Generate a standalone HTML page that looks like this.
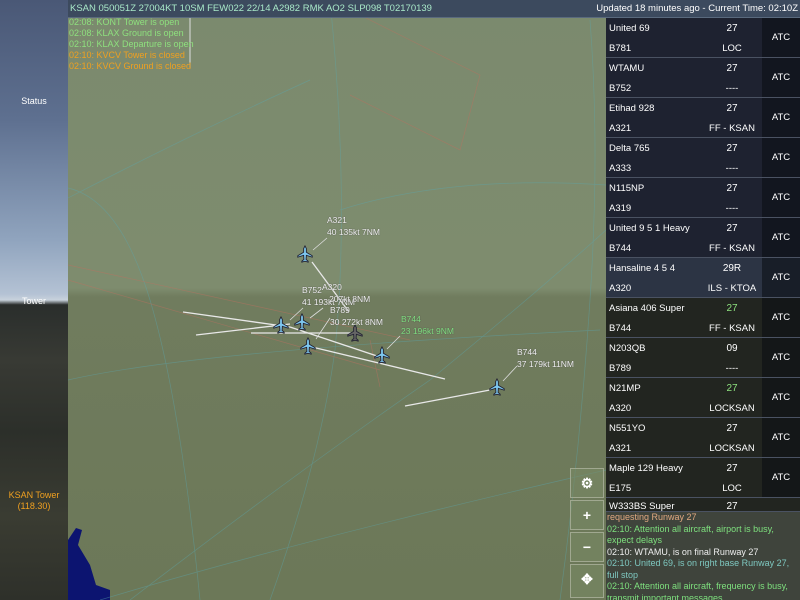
<!DOCTYPE html>
<html><head><meta charset="utf-8"><style>
*{margin:0;padding:0;box-sizing:border-box}
html,body{width:800px;height:600px;overflow:hidden}
body{position:relative;font-family:"Liberation Sans",sans-serif;font-size:9px;background:#6e7858}
#left{position:absolute;left:0;top:0;width:68px;height:600px;background:linear-gradient(#4a5876 0%,#5e7090 20%,#90a4be 40%,#b4c2d4 49%,#c8d2dc 50%,#2a2e2c 50.8%,#383a34 60%,#2c2f2a 72%,#3a3c32 86%,#2e302a 100%)}
#left div{position:absolute;width:68px;text-align:center;color:#fff}
#map{position:absolute;left:68px;top:0;width:538px;height:600px;background:linear-gradient(#7b8a6e 0%,#7e8c6e 48%,#707c5e 49.5%,#6c7858 100%)}
#top{position:absolute;left:68px;top:0;width:732px;height:18px;background:#3c4a5e;color:#a8e8c8;font-size:9.5px;line-height:18px;padding-left:2px;border-bottom:1px solid #5a6a7e}
#top span{position:absolute;right:2px;top:0;color:#fff}
.log{position:absolute;left:69px;top:17px;font-size:9px;line-height:11px}
.strip{position:absolute;left:606px;width:194px;height:40px;border-bottom:1px solid #4a5262;color:#fff;font-size:9.5px;overflow:hidden}
.strip .a{position:absolute;left:3px;top:5px}
.strip .b{position:absolute;left:3px;top:25px}
.strip .c{position:absolute;left:100px;width:52px;text-align:center;top:5px;font-size:10px}
.strip .d{position:absolute;left:100px;width:52px;text-align:center;top:25px}
.strip .e{position:absolute;left:156px;top:0;width:38px;height:39px;background:rgba(10,12,18,.55);text-align:center;line-height:39px}
#msgs{position:absolute;left:606px;top:512px;width:194px;height:88px;background:rgba(58,62,58,.9);font-size:9px;line-height:11.5px;color:#7ee07e;padding:0 0 0 1px;overflow:hidden}
.btn{position:absolute;left:570px;width:34px;height:30px;border:1px solid #a0a890;background:rgba(120,136,100,.6);color:#fff;text-align:center;font-weight:bold;font-size:14px;line-height:28px}
.lbl{position:absolute;color:#eee;font-size:8.5px;line-height:12px;text-shadow:0 0 1px #444}
</style></head><body>
<div id="left">
<div style="top:96px">Status</div>
<div style="top:296px">Tower</div>
<div style="top:490px;color:#f0a020;line-height:11px">KSAN Tower<br>(118.30)</div>
</div>
<div id="map"></div>
<svg style="position:absolute;left:0;top:0" width="800" height="600">
<defs><symbol id="pl" viewBox="-10 -10 20 20"><path d="M0-9 L1.5-6 L1.5-2 L8 2 L8 3.5 L1.5 1.5 L1.2 6 L3.5 8 L3.5 9 L0 8 L-3.5 9 L-3.5 8 L-1.2 6 L-1.5 1.5 L-8 3.5 L-8 2 L-1.5-2 L-1.5-6Z" stroke="#223" stroke-width="1"/></symbol></defs>
<path d="M68 540 L76 528 L82 530 L78 545 L90 565 L96 585 L110 590 L110 600 L68 600Z" fill="#0c1470"/>
<g fill="none" stroke="#5aa8b0" stroke-width="0.7" opacity=".45">
<path d="M68 198 Q200 130 310 80"/><path d="M68 188 Q120 200 150 300 Q180 400 200 600"/>
<path d="M330 0 Q350 200 335 350 Q320 460 270 600"/><path d="M340 210 Q450 175 606 185"/>
<path d="M130 600 Q300 470 430 380 Q540 290 606 230"/><path d="M590 20 Q600 150 590 300 Q580 450 560 600"/>
<path d="M68 380 Q200 350 600 330"/><path d="M100 600 Q300 540 606 470"/>
</g>
<g fill="none" stroke="#c07060" stroke-width="0.7" opacity=".5">
<path d="M68 265 L410 340"/><path d="M68 280 L380 370"/><path d="M330 0 L480 75 L460 150 L350 95"/><path d="M370 340 L380 387"/>
</g>
<g stroke="#e8e8e8" stroke-width="1.3">
<line x1="312" y1="262" x2="349" y2="312"/><line x1="183" y1="312" x2="290" y2="327"/><line x1="196" y1="335" x2="290" y2="324"/>
<line x1="251" y1="333" x2="355" y2="333"/><line x1="312" y1="347" x2="445" y2="379"/><line x1="290" y1="327" x2="380" y2="357"/><line x1="405" y1="406" x2="490" y2="390"/>
</g>
<g stroke="#ddd" stroke-width=".8">
<line x1="327" y1="238" x2="313" y2="250"/><line x1="303" y1="308" x2="290" y2="320"/><line x1="323" y1="308" x2="310" y2="318"/><line x1="330" y1="318" x2="316" y2="339"/><line x1="400" y1="336" x2="387" y2="349"/><line x1="517" y1="366" x2="503" y2="381"/>
</g>
<line x1="190" y1="18" x2="190" y2="68" stroke="#ddd" stroke-width="1"/>
<g fill="#7ec8f0"><use href="#pl" x="296" y="245" width="18" height="18"/>
<use href="#pl" x="272" y="316" width="18" height="18"/><use href="#pl" x="293" y="313" width="18" height="18"/>
<use href="#pl" x="299" y="337" width="18" height="18"/><use href="#pl" x="373" y="346" width="18" height="18"/>
<use href="#pl" x="488" y="378" width="18" height="18"/></g>
<use href="#pl" x="346" y="324" width="18" height="18" fill="#666"/>
</svg>
<div class="log"><div style="color:#8ee07e">02:08: KONT Tower is open</div><div style="color:#8ee07e">02:08: KLAX Ground is open</div><div style="color:#8ee07e">02:10: KLAX Departure is open</div><div style="color:#f0a020">02:10: KVCV Tower is closed</div><div style="color:#f0a020">02:10: KVCV Ground is closed</div></div>
<div class="lbl" style="left:327px;top:214px">A321<br>40 135kt 7NM</div>
<div class="lbl" style="left:302px;top:284px">B752<br>41 193kt 7NM</div>
<div class="lbl" style="left:322px;top:281px">A320<br>&nbsp;&nbsp;&nbsp;207kt 8NM</div>
<div class="lbl" style="left:330px;top:304px">B789<br>30 272kt 8NM</div>
<div class="lbl" style="left:401px;top:313px;color:#80e080">B744<br>23 196kt 9NM</div>
<div class="lbl" style="left:517px;top:346px">B744<br>37 179kt 11NM</div>
<div id="top">KSAN 050051Z 27004KT 10SM FEW022 22/14 A2982 RMK AO2 SLP098 T02170139<span>Updated 18 minutes ago - Current Time: 02:10Z</span></div>
<div style="position:absolute;left:606px;top:18px;width:194px;height:280px;background:#1e2230"></div>
<div style="position:absolute;left:606px;top:298px;width:194px;height:214px;background:#222520"></div>
<div class="strip" style="top:18px"><div class="a">United 69</div><div class="b">B781</div><div class="c">27</div><div class="d">LOC</div><div class="e">ATC</div></div>
<div class="strip" style="top:58px"><div class="a">WTAMU</div><div class="b">B752</div><div class="c">27</div><div class="d">----</div><div class="e">ATC</div></div>
<div class="strip" style="top:98px"><div class="a">Etihad 928</div><div class="b">A321</div><div class="c">27</div><div class="d">FF - KSAN</div><div class="e">ATC</div></div>
<div class="strip" style="top:138px"><div class="a">Delta 765</div><div class="b">A333</div><div class="c">27</div><div class="d">----</div><div class="e">ATC</div></div>
<div class="strip" style="top:178px"><div class="a">N115NP</div><div class="b">A319</div><div class="c">27</div><div class="d">----</div><div class="e">ATC</div></div>
<div class="strip" style="top:218px"><div class="a">United 9 5 1 Heavy</div><div class="b">B744</div><div class="c">27</div><div class="d">FF - KSAN</div><div class="e">ATC</div></div>
<div class="strip" style="top:258px;background:#2c3444"><div class="a">Hansaline 4 5 4</div><div class="b">A320</div><div class="c">29R</div><div class="d">ILS - KTOA</div><div class="e">ATC</div></div>
<div class="strip" style="top:298px"><div class="a">Asiana 406 Super</div><div class="b">B744</div><div class="c" style="color:#8ee07e">27</div><div class="d">FF - KSAN</div><div class="e">ATC</div></div>
<div class="strip" style="top:338px"><div class="a">N203QB</div><div class="b">B789</div><div class="c">09</div><div class="d">----</div><div class="e">ATC</div></div>
<div class="strip" style="top:378px"><div class="a">N21MP</div><div class="b">A320</div><div class="c" style="color:#8ee07e">27</div><div class="d">LOCKSAN</div><div class="e">ATC</div></div>
<div class="strip" style="top:418px"><div class="a">N551YO</div><div class="b">A321</div><div class="c">27</div><div class="d">LOCKSAN</div><div class="e">ATC</div></div>
<div class="strip" style="top:458px"><div class="a">Maple 129 Heavy</div><div class="b">E175</div><div class="c">27</div><div class="d">LOC</div><div class="e">ATC</div></div>
<div class="strip" style="top:498px;height:14px"><div class="a" style="top:3px">W333BS Super</div><div class="c" style="top:3px">27</div></div>
<div id="msgs"><div style="color:#e0a880">requesting Runway 27</div><div>02:10: Attention all aircraft, airport is busy, expect delays</div><div style="color:#eee">02:10: WTAMU, is on final Runway 27</div><div style="color:#7ec8c0">02:10: United 69, is on right base Runway 27, full stop</div><div>02:10: Attention all aircraft, frequency is busy, transmit important messages</div></div>
<div class="btn" style="top:468px">⚙</div>
<div class="btn" style="top:500px">+</div>
<div class="btn" style="top:532px">−</div>
<div class="btn" style="top:564px;height:34px">✥</div>
</body></html>
